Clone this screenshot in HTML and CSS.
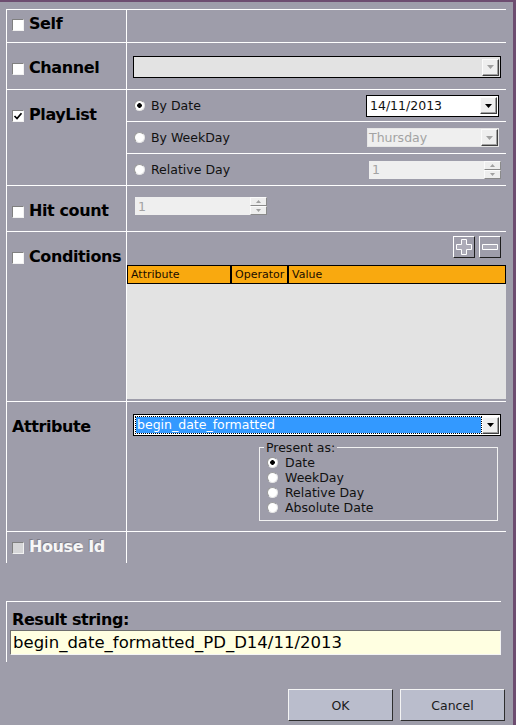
FILE: index.html
```html
<!DOCTYPE html>
<html>
<head>
<meta charset="utf-8">
<link rel="stylesheet" href="styles.css">
</head>
<body>
<div class="frame">
  <div class="grid">
    <div class="lab top-self"><span class="cb"></span><span class="lt">Self</span></div>
    <div class="val"></div>

    <div class="lab"><span class="cb"></span><span class="lt">Channel</span></div>
    <div class="val channel-cell">
      <div class="combo black grey wide">
        <span class="ctext"></span>
        <span class="dd"><svg width="7" height="4" viewBox="0 0 7 4"><polygon points="0,0 7,0 3.5,4" fill="#a0a0a0"/></svg></span>
      </div>
    </div>

    <div class="lab"><span class="cb"><svg width="10" height="10" viewBox="0 0 10 10"><path d="M1.5 5 L4 7.5 L8.5 2.2" fill="none" stroke="#000" stroke-width="1.7"/></svg></span><span class="lt">PlayList</span></div>
    <div class="val split">
      <div class="subrow">
        <span class="rb on"></span><span class="rl">By Date</span>
        <div class="combo black date">
          <span class="ctext">14/11/2013</span>
          <span class="dd"><svg width="7" height="4" viewBox="0 0 7 4"><polygon points="0,0 7,0 3.5,4" fill="#000"/></svg></span>
        </div>
      </div>
      <div class="subrow">
        <span class="rb"></span><span class="rl">By WeekDay</span>
        <div class="combo flat day">
          <span class="ctext dim">Thursday</span>
          <span class="dd"><svg width="7" height="4" viewBox="0 0 7 4"><polygon points="0,0 7,0 3.5,4" fill="#a0a0a0"/></svg></span>
        </div>
      </div>
      <div class="subrow">
        <span class="rb"></span><span class="rl">Relative Day</span>
        <div class="spin rel">
          <span class="ctext dim">1</span>
          <span class="spinbtns">
            <span class="sb"><svg width="5" height="3" viewBox="0 0 5 3"><polygon points="0,3 5,3 2.5,0" fill="#a0a0a0"/></svg></span>
            <span class="sb"><svg width="5" height="3" viewBox="0 0 5 3"><polygon points="0,0 5,0 2.5,3" fill="#a0a0a0"/></svg></span>
          </span>
        </div>
      </div>
    </div>

    <div class="lab"><span class="cb"></span><span class="lt">Hit count</span></div>
    <div class="val hit-cell">
      <div class="spin hit">
        <span class="ctext dim">1</span>
        <span class="spinbtns">
          <span class="sb"><svg width="5" height="3" viewBox="0 0 5 3"><polygon points="0,3 5,3 2.5,0" fill="#a0a0a0"/></svg></span>
          <span class="sb"><svg width="5" height="3" viewBox="0 0 5 3"><polygon points="0,0 5,0 2.5,3" fill="#a0a0a0"/></svg></span>
        </span>
      </div>
    </div>

    <div class="lab"><span class="cb"></span><span class="lt">Conditions</span></div>
    <div class="val cond">
      <div class="tools">
        <span class="tb"><svg width="20" height="20" viewBox="0 0 20 20"><path d="M7.5 2.5H12.5V7.5H17.5V12.5H12.5V17.5H7.5V12.5H2.5V7.5H7.5Z" fill="#adacb8" stroke="#fff" stroke-width="1"/></svg></span>
        <span class="tb"><svg width="20" height="20" viewBox="0 0 20 20"><path d="M2.5 7.5H17.5V12.5H2.5Z" fill="#adacb8" stroke="#fff" stroke-width="1"/></svg></span>
      </div>
      <div class="tbl">
        <div class="thead">
          <span class="th c1">Attribute</span>
          <span class="th c2">Operator</span>
          <span class="th c3">Value</span>
        </div>
        <div class="tbody"></div>
      </div>
    </div>

    <div class="lab"><span class="lt nocb">Attribute</span></div>
    <div class="val attr-cell">
      <div class="combo black wide attr">
        <span class="sel">begin_date_formatted</span>
        <span class="dd"><svg width="7" height="4" viewBox="0 0 7 4"><polygon points="0,0 7,0 3.5,4" fill="#000"/></svg></span>
      </div>
      <fieldset class="present">
        <legend>Present as:</legend>
        <div class="opt"><span class="rb on"></span><span>Date</span></div>
        <div class="opt"><span class="rb"></span><span>WeekDay</span></div>
        <div class="opt"><span class="rb"></span><span>Relative Day</span></div>
        <div class="opt"><span class="rb"></span><span>Absolute Date</span></div>
      </fieldset>
    </div>

    <div class="lab top-house"><span class="cb off"></span><span class="lt disabled">House Id</span></div>
    <div class="val"></div>
  </div>

  <div class="result">
    <div class="rlabel">Result string:</div>
    <div class="rinput">begin_date_formatted_PD_D14/11/2013</div>
  </div>

  <div class="buttons">
    <span class="btn">OK</span>
    <span class="btn">Cancel</span>
  </div>
</div>
</body>
</html>
```

FILE: styles.css
```css
html, body {
  margin: 0;
  padding: 0;
}
body {
  background: #9e9daa;
  font-family: "DejaVu Sans", Tahoma, sans-serif;
  font-size: 12.5px;
  color: #111;
}
.frame {
  width: 516px;
  height: 725px;
  box-sizing: border-box;
  border-top: 2px solid #6d4d70;
  border-right: 3px solid #6d4d70;
  overflow: hidden;
}
.grid {
  margin: 7px 0 0 6px;
  display: grid;
  grid-template-columns: 120px 380px;
  grid-template-rows: 33px 47px 96px 46px 170px 130px 32px;
}
.lab, .val {
  box-sizing: border-box;
  border-top: 1px solid #fff;
  border-left: 1px solid #fff;
}
.lab {
  display: flex;
  align-items: flex-start;
  padding: 16px 0 0 5px;
}
.lab.top-self { padding-top: 5px; }
.lab.top-house { padding-top: 6px; }
.cb {
  width: 12px;
  height: 12px;
  box-sizing: border-box;
  margin-top: 4px;
  background: #fff;
  border: 1px solid;
  border-color: #808080 #f2f2f2 #f2f2f2 #808080;
  display: flex;
  align-items: center;
  justify-content: center;
  flex: none;
}
.cb.off { background: #d6d6d8; }
.lt {
  font-weight: bold;
  font-size: 16px;
  letter-spacing: -0.4px;
  line-height: 18px;
  margin-left: 5px;
  color: #000;
  white-space: nowrap;
}
.lt.nocb { margin-left: 0; }
.lt.disabled {
  color: #f6f6f6;
  text-shadow: -1px -1px 0 #7e7d88;
}

/* right column */
.channel-cell { padding: 13px 0 0 6px; }
.split { border-top: none; }
.subrow {
  box-sizing: border-box;
  height: 32px;
  border-top: 1px solid #fff;
  display: flex;
  align-items: center;
  padding: 0 7px;
}
.rb {
  width: 11px;
  height: 11px;
  box-sizing: border-box;
  border-radius: 50%;
  border: 1px solid;
  border-color: #9a9a9a #e6e6e6 #e6e6e6 #9a9a9a;
  background: #fff;
  flex: none;
}
.rb.on { background: radial-gradient(circle, #000 0 2px, #fff 2.6px); }
.rl { margin-left: 6px; white-space: nowrap; }

.combo {
  display: flex;
  align-items: center;
  box-sizing: border-box;
  height: 22px;
  background: #fff;
}
.combo.black { border: 1px solid #000; padding: 0 1px 0 0; }
.combo.grey { background: #e3e3e3; }
.combo.wide { width: 368px; }
.combo.date { width: 133px; margin-left: auto; margin-right: 0; }
.combo.flat {
  height: 19px;
  background: #efefef;
  border: 1px solid #e6e6e6;
  width: 132px;
  margin-left: auto;
  margin-right: 0;
}
.ctext {
  flex: 1;
  padding-left: 3px;
  white-space: nowrap;
  line-height: 15px;
}
.ctext.dim { color: #a3a3a3; padding-left: 1px; }
.dd {
  width: 17px;
  height: 17px;
  box-sizing: border-box;
  background: #eeeeee;
  border: 1px solid;
  border-color: #fbfbfb #404040 #404040 #fbfbfb;
  box-shadow: inset -1px -1px 0 #a0a0a0;
  display: flex;
  align-items: center;
  justify-content: center;
  flex: none;
}
.spin {
  display: flex;
  align-items: stretch;
  box-sizing: border-box;
  height: 18px;
  width: 132px;
  background: #efefef;
}
.spin .ctext { display: flex; align-items: center; padding-left: 3px; }
.spin.rel { margin-left: auto; margin-right: -2px; }
.hit-cell { padding: 11px 0 0 8px; }
.spinbtns {
  display: flex;
  flex-direction: column;
  width: 17px;
  flex: none;
}
.sb {
  flex: 1;
  box-sizing: border-box;
  background: #eeeeee;
  border: 1px solid;
  border-color: #fbfbfb #8a8a8a #8a8a8a #fbfbfb;
  display: flex;
  align-items: center;
  justify-content: center;
}

/* conditions */
.cond {
  display: flex;
  flex-direction: column;
}
.tools {
  display: flex;
  justify-content: flex-end;
  gap: 4px;
  padding: 4px 5px 0 0;
}
.tb {
  width: 22px;
  height: 22px;
  box-sizing: border-box;
  border: 1px solid;
  border-color: #fff #1e1e1e #1e1e1e #fff;
  display: flex;
  align-items: center;
  justify-content: center;
}
.tbl {
  margin-top: 7px;
  height: 134px;
  display: flex;
  flex-direction: column;
}
.thead {
  display: flex;
  height: 19px;
  box-sizing: border-box;
  border: 1px solid #000;
  background: #f9a90f;
  font-size: 11px;
  line-height: 17px;
  color: #1a0d00;
}
.th { padding-left: 3px; box-sizing: border-box; white-space: nowrap; }
.th.c1 { width: 104px; border-right: 2px solid #000; }
.th.c2 { width: 57px; border-right: 2px solid #000; }
.th.c3 { flex: 1; }
.tbody { flex: 1; background: #e3e3e3; }

/* attribute */
.attr-cell { padding: 12px 0 0 6px; }
.combo.attr { padding: 2px 1px 2px 2px; }
.sel {
  flex: 1;
  height: 16px;
  margin-right: 1px;
  background: #3399ff;
  color: #fff;
  outline: 1px dotted #000;
  line-height: 16px;
  padding-left: 1px;
  white-space: nowrap;
}
.present {
  margin: 4px 0 0 126px;
  padding: 0 0 5px 4px;
  border: 1px solid #f2f2f2;
  width: 239px;
  box-sizing: border-box;
  min-width: 0;
}
.present legend {
  padding: 0 2px;
  line-height: 15px;
  font-size: 12.5px;
}
.opt {
  display: flex;
  align-items: center;
  height: 15px;
  margin-left: 3px;
  gap: 7px;
  white-space: nowrap;
}

/* result */
.result {
  margin: 38px 0 0 6px;
  width: 495px;
  box-sizing: border-box;
  border-top: 1px solid #fff;
  border-left: 1px solid #fff;
  padding: 9px 0 7px 3px;
}
.rlabel {
  font-weight: bold;
  font-size: 16px;
  letter-spacing: -0.4px;
  line-height: 18px;
  margin-left: 2px;
  color: #000;
}
.rinput {
  margin-top: 1px;
  height: 25px;
  box-sizing: border-box;
  background: #ffffe1;
  border: 1px solid;
  border-color: #6e6e6e #f4f4f4 #f4f4f4 #6e6e6e;
  font-size: 16.5px;
  line-height: 23px;
  padding-left: 2px;
  white-space: nowrap;
  color: #000;
}

/* buttons */
.buttons {
  display: flex;
  justify-content: flex-end;
  gap: 7px;
  margin-top: 27px;
  padding-right: 8px;
}
.btn {
  width: 105px;
  height: 32px;
  box-sizing: border-box;
  background: #babdcc;
  border: 1px solid;
  border-color: #f4f4f4 #2e2e2e #2e2e2e #f4f4f4;
  display: flex;
  align-items: center;
  justify-content: center;
  color: #1b1b1b;
}
```
